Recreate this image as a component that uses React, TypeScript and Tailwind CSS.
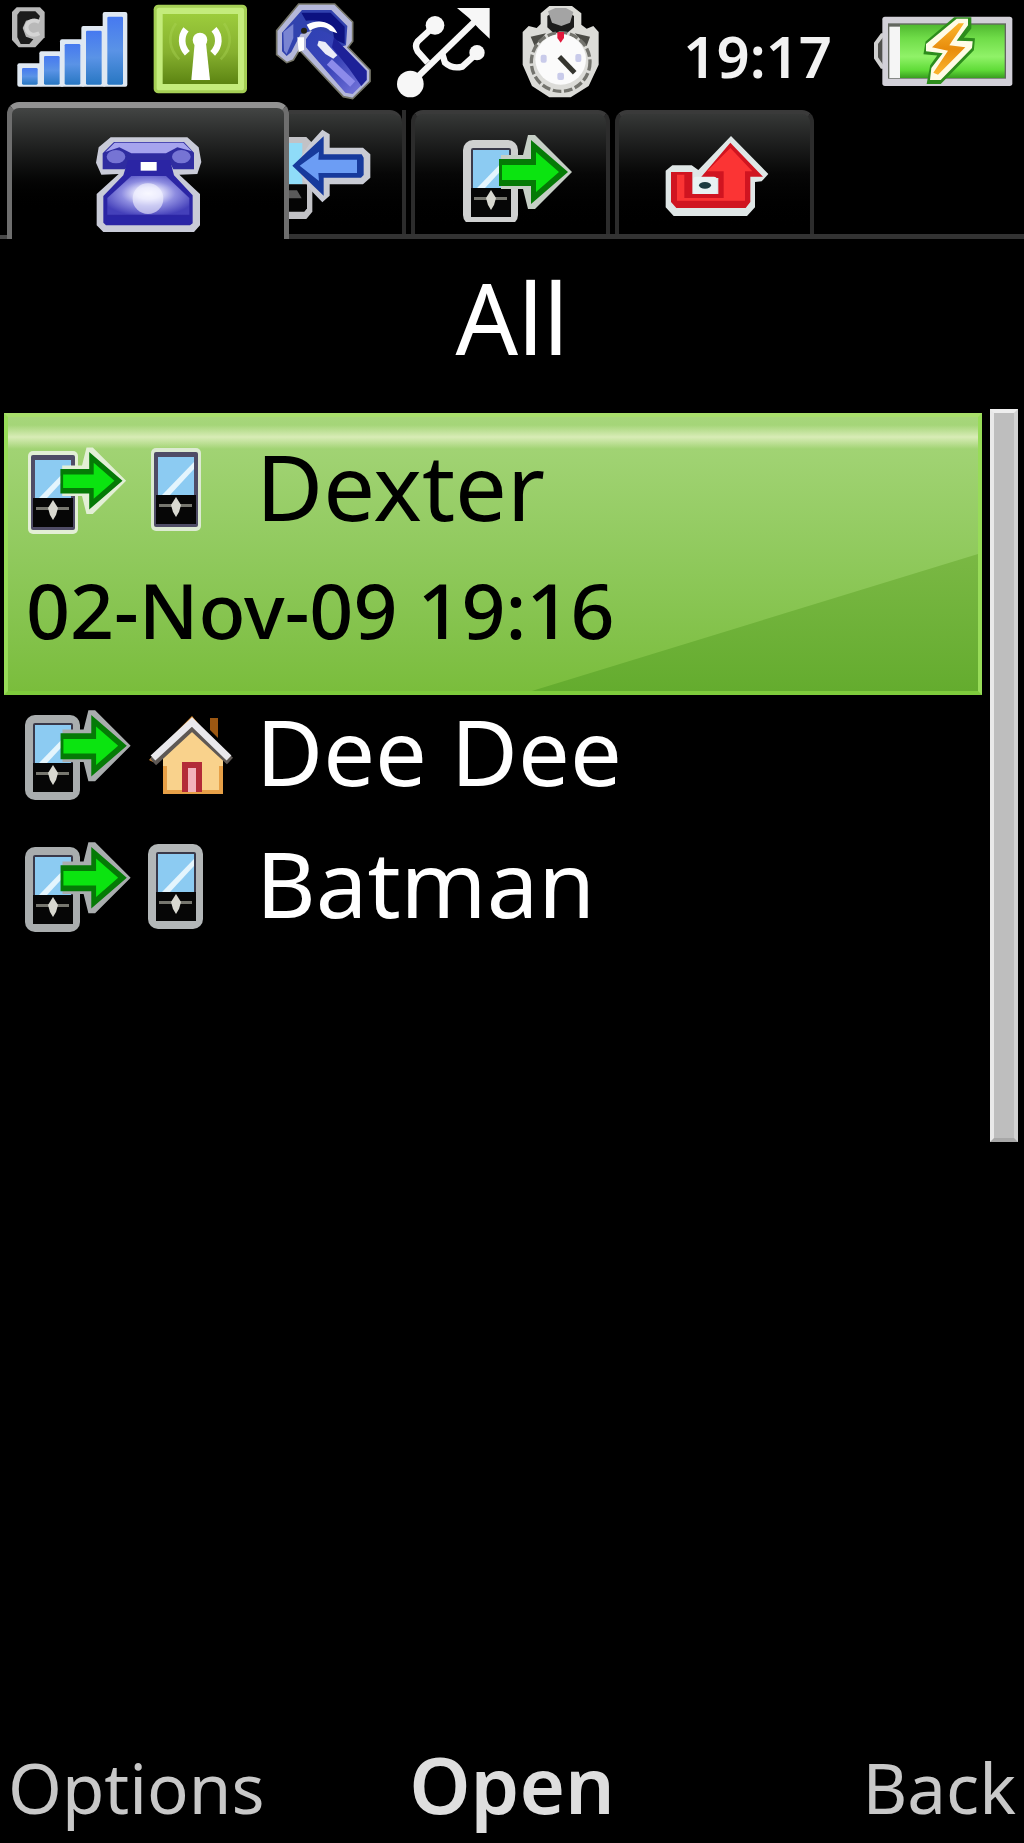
import type { ReactNode } from "react";

function SignalIcon() {
  const bars = [
    { x: 66, y: 204 },
    { x: 132, y: 168 },
    { x: 194, y: 132 },
    { x: 258, y: 92 },
    { x: 322, y: 50 },
  ];
  return (
    <svg className="h-[100px] w-[122px] shrink-0" viewBox="24 0 366 300" role="img" aria-label="Signal strength">
      <defs>
        <linearGradient id="bar" x1="0" y1="0" x2="0" y2="1">
          <stop offset="0" stopColor="#4679f0" />
          <stop offset="0.5" stopColor="#5a93e6" />
          <stop offset="1" stopColor="#2877c2" />
        </linearGradient>
      </defs>
      <path d="M50 22h70l14 14v76l-28 30H56l-20-22V36Z" fill="#b9b9b9" />
      <path d="M60 34h46l14 14-6 16-16-8-20 6-10 22 10 26 22 8-12 14H62L52 112V44Z" fill="#1c1c1c" />
      <path d="M118 66c-22-12-42 4-38 22 4 16 22 20 38 12" fill="none" stroke="#d4d4d4" strokeWidth="12" />
      {bars.map((b) => (
        <rect key={b.x} x={b.x - 14} y={b.y - 14} width="74" height={266 - b.y + 8} rx="6" fill="#dfe8f2" />
      ))}
      {bars.map((b) => (
        <rect key={b.x} x={b.x} y={b.y} width="47" height={254 - b.y} rx="4" fill="url(#bar)" />
      ))}
    </svg>
  );
}

function AntennaIcon() {
  return (
    <svg className="h-[100px] w-24 shrink-0" viewBox="456 0 288 300" role="img" aria-label="Radio">
      <defs>
        <linearGradient id="radio" x1="0" y1="0" x2="0" y2="1">
          <stop offset="0" stopColor="#9ccc3c" />
          <stop offset="0.55" stopColor="#86b02f" />
          <stop offset="1" stopColor="#5c8412" />
        </linearGradient>
      </defs>
      <rect x="461" y="14" width="280" height="266" rx="14" fill="#a5cf55" />
      <rect x="470" y="23" width="262" height="248" rx="8" fill="#c4ec7c" />
      <rect x="488" y="42" width="226" height="210" fill="url(#radio)" />
      <path d="M528 70c-26 36-22 76 10 108M672 70c26 36 22 76-10 108" fill="none" stroke="#a9d456" strokeWidth="8" opacity="0.4" />
      <path d="M558 88c-16 20-16 50 4 72M642 88c18 20 18 50-4 72" fill="none" stroke="#fff" strokeWidth="20" />
      <circle cx="600" cy="120" r="22" fill="#fff" />
      <path d="M584 130h34l12 110h-56Z" fill="#fff" />
    </svg>
  );
}

function HandsetIcon() {
  return (
    <svg className="h-[100px] w-[105px] shrink-0" viewBox="30 0 315 300" role="img" aria-label="Call">
      <defs>
        <linearGradient id="handset" x1="0" y1="0" x2="1" y2="1">
          <stop offset="0" stopColor="#2f41b4" />
          <stop offset="0.5" stopColor="#3a44b8" />
          <stop offset="1" stopColor="#7d7ce0" />
        </linearGradient>
      </defs>
      <path
        d="M116 12h108l54 54v58l-14 18 66 68v34l-52 52-28-6L118 150l-18 30-20 8-30-24V92Z"
        fill="#b5b8da"
        stroke="#77776a"
        strokeWidth="5"
      />
      <path d="M126 30h88l48 48-4 58-36 10-66-54-34 10-28 54-14 12-14-14V98Z" fill="#3142ae" />
      <path d="M124 38h88l42 42v52l-32-14c0-46-32-60-84-56Z" fill="#0c1280" />
      <path d="M140 74c36-18 76-10 92 26l-22-8c-10-12-36-18-60 0Z" fill="#fff" />
      <path d="M70 96l30-24v42l-20 48-8-10Z" fill="#7984d2" />
      <path d="M112 112h20v38l-16 6Z" fill="#fff" />
      <circle cx="132" cy="92" r="9" fill="#222014" />
      <path d="M138 118l18-26c24-8 54 6 72 28l92 94v26l-42 42-22-4L138 142Z" fill="url(#handset)" />
      <path d="M222 112l98 100v28l-16 18-38-54-50-62Z" fill="#1d2198" />
      <path d="M176 122l20 4 36 40-12 10-24-14-24-26Z" fill="#fff" opacity="0.9" />
      <path d="M208 186l70 66" stroke="#8c8bea" strokeWidth="22" />
    </svg>
  );
}

function UsbIcon() {
  return (
    <svg className="h-[100px] w-[98px] shrink-0" viewBox="408 0 294 300" role="img" aria-label="USB connected">
      <g fill="none" stroke="#f7f7f7" strokeWidth="19">
        <path d="M448 252L648 58" />
        <path d="M520 78l-50 46q-10 14 0 30l30 34" />
        <path d="M544 162l8 26q22 20 52 12l48-44" />
      </g>
      <g fill="#f7f7f7">
        <path d="M588 24h98v92l-32-30-30-32Z" />
        <circle cx="448" cy="252" r="40" />
        <circle cx="522" cy="76" r="28" />
        <circle cx="648" cy="158" r="23" />
      </g>
    </svg>
  );
}

function StopwatchIcon() {
  return (
    <svg className="h-[100px] w-[86px] shrink-0" viewBox="771 0 258 300" role="img" aria-label="Stopwatch">
      <path d="M868 18h68l28 22v34l16 12 20-8 16 18v98l-30 64-54 34h-64l-52-34-28-64V96l18-18 24 6 12-12V40Z" fill="#dcdcd8" />
      <path d="M862 48l20-14h38l22 14v34l-20 16h-42l-18-16Z" fill="#1b1b1b" />
      <path d="M864 34l22-10h32l22 12-10 32-26 10-28-10Z" fill="#a4a4a4" />
      <path d="M812 110l46-10-34 38ZM990 110l-46-10 36 38Z" fill="#4b4b46" />
      <circle cx="902" cy="186" r="88" fill="none" stroke="#74746e" strokeWidth="10" strokeDasharray="26 8" />
      <circle cx="902" cy="178" r="76" fill="#fbfbfb" />
      <path d="M892 96h20v18l-10 14-10-14Z" fill="#e2183c" />
      <g fill="#c9cbea">
        <rect x="842" y="164" width="18" height="24" rx="6" />
        <rect x="946" y="162" width="18" height="24" rx="6" />
        <rect x="892" y="218" width="20" height="22" rx="6" />
      </g>
      <path d="M898 170l46 48" stroke="#35352f" strokeWidth="15" />
    </svg>
  );
}

function BatteryIcon() {
  return (
    <svg className="h-[100px] w-[142px] shrink-0" viewBox="636 0 426 300" role="img" aria-label="Battery charging">
      <defs>
        <linearGradient id="charge" x1="0" y1="0" x2="0" y2="1">
          <stop offset="0" stopColor="#50b830" />
          <stop offset="0.25" stopColor="#6fdc48" />
          <stop offset="0.6" stopColor="#90f268" />
          <stop offset="0.85" stopColor="#60dc38" />
          <stop offset="1" stopColor="#399e20" />
        </linearGradient>
        <linearGradient id="bolt" x1="0" y1="0" x2="0" y2="1">
          <stop offset="0" stopColor="#fbb52c" />
          <stop offset="0.5" stopColor="#e88c0c" />
          <stop offset="1" stopColor="#fbb52c" />
        </linearGradient>
      </defs>
      <path d="M682 106h-16l-18 24v44l18 26h16" fill="#50504d" stroke="#d0d0d0" strokeWidth="12" />
      <rect x="667" y="50" width="390" height="208" rx="8" fill="#d2d0d8" />
      <rect x="684" y="70" width="354" height="166" fill="#62665f" />
      <rect x="688" y="80" width="34" height="154" fill="#f5f5f5" />
      <rect x="720" y="74" width="314" height="160" fill="url(#charge)" />
      <path d="M886 62h38v20l-32 40 42 2-2 22-94 96h-26l8-42 30-42-48-4 4-24Z" fill="none" stroke="#2d8c1c" strokeWidth="20" />
      <path d="M890 56h34v20l-34 46 48 2-2 20-94 96h-32l4-36 34-44-50-6v-22Z" fill="#fffbe6" />
      <path d="M896 70h16l-44 66 48 6-82 82-14-6 44-66-48-10Z" fill="url(#bolt)" />
    </svg>
  );
}

function TelephoneIcon() {
  return (
    <svg className="h-[100px] w-[112px]" viewBox="278 118 336 300" aria-hidden="true">
      <defs>
        <radialGradient id="dial" cx="0.5" cy="0.45" r="0.6">
          <stop offset="0" stopColor="#fff" />
          <stop offset="0.25" stopColor="#e4e4fc" />
          <stop offset="0.55" stopColor="#8d8ce0" />
          <stop offset="1" stopColor="#4440ba" />
        </radialGradient>
      </defs>
      <path
        d="M334 128h230l34 30 8 44-12 36-54 2 62 58v94l-18 20H312l-20-20v-94l66-60-52 2-16-36 8-46Z"
        fill="#c9cbd8"
      />
      <path d="M344 142h210l30 32v50h-62l-10-20H388l-10 20h-68v-48Z" fill="#2f2ca0" />
      <path d="M346 144h206l26 26-44-12-34 18H396l-36-18-42 14Z" fill="#a6a4ee" />
      <ellipse cx="350" cy="186" rx="28" ry="20" fill="#7674d4" />
      <ellipse cx="546" cy="186" rx="28" ry="20" fill="#7674d4" />
      <path d="M386 196h126l12 46 56 60v84l-8 6H320l-8-8v-80l60-62Z" fill="#2b25a4" />
      <path d="M396 244h104l70 66v50H324v-50Z" fill="url(#dial)" />
      <circle cx="446" cy="312" r="46" fill="#f4f4ff" opacity="0.6" />
      <rect x="424" y="202" width="48" height="26" fill="#fff" />
      <path d="M322 376h252" stroke="#2925a6" strokeWidth="20" />
    </svg>
  );
}

function IncomingIcon() {
  return (
    <svg className="h-[100px] w-[90px]" viewBox="866 90 270 300" aria-hidden="true">
      <path d="M850 126h68l18 18v206l-18 22h-68Z" fill="#c2c2c6" />
      <path d="M850 144h56v124h-56Z" fill="#8fdcf8" />
      <path d="M850 268h70v72l-8 10h-62Z" fill="#050505" />
      <path d="M850 286h40l14 24h-54Z" fill="#5a5a5a" />
      <path d="M966 104l22 14v40h100l22 20v70l-22 20H988v34l-22 20-38-40-44-70 44-66Z" fill="#c9cbd4" />
      <path d="M970 124v54h114l6 10v52l-8 8H970v54L876 212Z" fill="#173a9c" />
      <path d="M956 170l-2 24h116v40H954l2 24-58-46Z" fill="#6c9df4" />
    </svg>
  );
}

/* Handset body with its screen and joystick, shared by several call icons. */
function PhoneBody({ frame, slim = false }: { frame: string; slim?: boolean }) {
  return (
    <>
      {slim ? (
        <rect x="3" y="1" width="50" height="83" rx="5" fill={frame} />
      ) : (
        <rect x="0" y="0" width="55" height="85" rx="10" fill={frame} />
      )}
      {slim ? (
        <rect x="6" y="5" width="44" height="75" rx="2" fill="#4f4c66" />
      ) : (
        <rect x="8" y="8" width="40" height="69" rx="2" fill="#39394a" />
      )}
      <rect x="10" y="10" width="36" height="38" fill="#8ccbf2" />
      <path d="M14 48L46 15v7L22 48Z" fill="#e4f5fd" />
      <rect x="8" y="48" width="40" height="29" fill="#060606" />
      <path d="M11 57h33v3H11Z" fill="#77776f" />
      <path d="M28 50l5 8-2 7-3 5-3-5-2-7Z" fill="#d8d8d0" />
    </>
  );
}

function GreenArrow({ edge }: { edge: string }) {
  return (
    <>
      <path d="M38 15h22l5-20h7l37 37-37 37h-7l-5-20H38Z" fill={edge} />
      <path d="M36 19h32V0l37 32-37 32V46H36Z" fill="#057a06" />
      <path d="M39 25h34V12l23 20-23 20V40H39Z" fill="#0be410" />
    </>
  );
}

function OutgoingIcon({ bright = false }: { bright?: boolean }) {
  const frame = bright ? "#e3efd6" : "#a9adae";
  return (
    <svg className="h-28 w-28 shrink-0" viewBox="-1 -20 112 112" role="img" aria-label="Outgoing call">
      <PhoneBody frame={frame} slim={bright} />
      <g transform={bright ? "translate(3 2) scale(0.9)" : "translate(1 0) scale(0.96)"}>
        <GreenArrow edge={frame} />
      </g>
    </svg>
  );
}

function MobileIcon({ bright = false }: { bright?: boolean }) {
  return (
    <svg className="h-28 w-[88px] shrink-0" viewBox="-2 -17 88 112" role="img" aria-label="Mobile">
      <PhoneBody frame={bright ? "#dcead2" : "#b3b7b8"} slim={bright} />
    </svg>
  );
}

function HomeIcon() {
  return (
    <svg className="h-28 w-[88px] shrink-0" viewBox="-3 -21 88 112" role="img" aria-label="Home">
      <path d="M61 2h8v20l-8-8Z" fill="#9b5712" />
      <path d="M14 36L43 10l31 28v40H14Z" fill="#f9d28c" />
      <path d="M14 74h60v4H14ZM14 50h4v28h-4ZM70 50h4v28h-4Z" fill="#e7a047" />
      <path d="M0 44L43 0l10 12-10 2L4 46Z" fill="#e08f2e" />
      <path d="M4 46L43 10l38 35" fill="none" stroke="#5e5854" strokeWidth="9" />
      <path d="M4 42L43 6l37 36" fill="none" stroke="#e9e8ec" strokeWidth="7" />
      <path d="M33 46h20v30H33Z" fill="#b32b38" />
      <path d="M39 52h8v24h-8Z" fill="#f2b2bc" />
    </svg>
  );
}

function TabOutgoingIcon() {
  return (
    <svg className="h-[100px] w-28" viewBox="0 -18 112 100" aria-hidden="true">
      <PhoneBody frame="#cfd0d0" />
      <GreenArrow edge="#c6cfc6" />
    </svg>
  );
}

function MissedIcon() {
  return (
    <svg className="h-[100px] w-[108px]" viewBox="790 80 324 300" aria-hidden="true">
      <path
        d="M994 122l112 114-20 22-20 2v76l-24 26H822l-24-26V226l20-16h58l20 14Z"
        fill="#dfe6e6"
      />
      <path d="M992 142l98 102h-38v76l-14 18H830l-16-18V230h64v66h78v-48h-54Z" fill="#d01420" />
      <path d="M992 158l66 70h-22v88H832v-78h22v70h118v-80h-50Z" fill="#fb3434" />
      <rect x="880" y="244" width="72" height="52" rx="10" fill="#e8f2f2" />
      <ellipse cx="916" cy="270" rx="18" ry="10" fill="#1c3c40" />
    </svg>
  );
}

function InactiveTab({ label, width, children }: { label: string; width: string; children: ReactNode }) {
  return (
    <button
      type="button"
      role="tab"
      aria-selected="false"
      aria-label={label}
      className={`flex overflow-hidden rounded-t-xl border-x-4 border-t-4 border-x-[#2c2c2c] border-t-[#3a3a3a] bg-linear-to-b from-[#363837] via-[#070707] via-50% to-black pt-2 ${width}`}
    >
      {children}
    </button>
  );
}

function CallName({ children }: { children: ReactNode }) {
  return <span className="ml-[22px] text-[92px] leading-[112px] whitespace-nowrap">{children}</span>;
}

export default function App() {
  return (
    <div className="flex min-h-screen flex-col bg-black font-['Noto_Sans',sans-serif] text-white">
      <header className="flex h-[102px] items-start justify-between pr-2.5 pl-2">
        <div className="flex gap-[22px]">
          <SignalIcon />
          <AntennaIcon />
          <HandsetIcon />
          <UsbIcon />
          <StopwatchIcon />
        </div>
        <div className="flex items-start gap-10">
          <time className="pt-2 text-[58px] leading-[96px] font-semibold text-[#f2f2f2]">19:17</time>
          <BatteryIcon />
        </div>
      </header>

      <nav role="tablist" aria-label="Call lists" className="flex h-[137px]">
        <div className="w-[7px] border-b-4 border-[#4a4a4a]" />
        <button
          type="button"
          role="tab"
          aria-selected="true"
          aria-label="All"
          className="flex w-[282px] shrink-0 justify-center rounded-t-xl border-x-[5px] border-t-[6px] border-x-[#6e6e6e] border-t-[#929292] bg-linear-to-b from-[#434544] to-black to-80% pt-[26px]"
        >
          <TelephoneIcon />
        </button>
        <div className="flex flex-1 gap-[5px] border-b-[5px] border-[#333333] pt-2">
          <div className="flex w-[117px] overflow-hidden border-r-4 border-[#2c2c2c]">
            <button
              type="button"
              role="tab"
              aria-selected="false"
              aria-label="Answered"
              className="flex w-full rounded-tr-xl border-t-4 border-[#3a3a3a] bg-linear-to-b from-[#363837] via-[#070707] via-50% to-black pt-[11px]"
            >
              <IncomingIcon />
            </button>
          </div>
          <InactiveTab label="Dialled" width="w-[199px] pl-[48px]">
            <TabOutgoingIcon />
          </InactiveTab>
          <InactiveTab label="Missed" width="w-[199px] pl-[44px]">
            <MissedIcon />
          </InactiveTab>
        </div>
      </nav>

      <h1 className="pt-[22px] pb-9 text-center text-[98px] leading-[112px]">All</h1>

      <main className="flex flex-1 gap-2 pr-1.5 pl-1">
        <ul className="flex-1 pt-1">
          <li className="relative border-4 border-t-[#a9df6b] border-r-[#98dc58] border-b-[#7ecb3c] border-l-[#98dc58] bg-linear-to-b from-[#a6d67a] to-[#7abd3c] text-black">
            <div className="absolute inset-x-0 top-2 h-6 bg-linear-to-b from-[#d8ecb6]/0 via-[#d8ecb6] to-[#d8ecb6]/0" />
            <div className="absolute right-0 bottom-0 h-1/2 w-[46%] bg-linear-to-b from-[#7ab844] to-[#64ac2e] [clip-path:polygon(0_100%,100%_0,100%_100%)]" />
            <a href="#dexter" className="relative block pt-[13px] pb-3.5 pl-4">
              <span className="flex">
                <OutgoingIcon bright />
                <span className="ml-2.5 flex">
                  <MobileIcon bright />
                </span>
                <CallName>Dexter</CallName>
              </span>
              <time className="block pl-0.5 text-[77px] leading-[135px] font-medium whitespace-nowrap">02-Nov-09 19:16</time>
            </a>
          </li>
          <li>
            <a href="#dee-dee" className="flex pb-5 pl-5">
              <OutgoingIcon />
              <span className="ml-2.5 flex">
                <HomeIcon />
              </span>
              <CallName>Dee Dee</CallName>
            </a>
          </li>
          <li>
            <a href="#batman" className="flex pb-5 pl-5">
              <OutgoingIcon />
              <span className="ml-2.5 flex">
                <MobileIcon />
              </span>
              <CallName>Batman</CallName>
            </a>
          </li>
        </ul>
        <div className="flex w-7 flex-col" aria-hidden="true">
          <div className="grow-55 border-4 border-t-[#eeeeee] border-r-[#d2d2d2] border-b-[#a8a8a8] border-l-[#e9e9e9] bg-[#bebebe]" />
          <div className="grow-45" />
        </div>
      </main>

      <footer className="grid grid-cols-3 items-baseline px-2 pb-2 text-[69px] leading-[96px] text-[#c8c8c8]">
        <button type="button" className="justify-self-start">Options</button>
        <button type="button" className="justify-self-center text-[78px] font-semibold text-[#dedede]">Open</button>
        <button type="button" className="justify-self-end">Back</button>
      </footer>
    </div>
  );
}
